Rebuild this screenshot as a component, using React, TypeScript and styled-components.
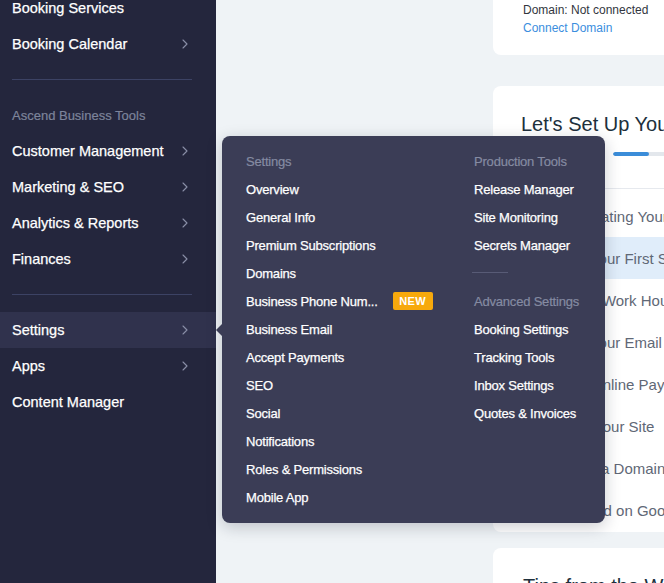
import React from "react";
import styled, { createGlobalStyle } from "styled-components";

const GlobalStyle = createGlobalStyle`
  html, body { margin: 0; padding: 0; }
  body {
    font-family: "Liberation Sans", Arial, sans-serif;
    background: #eff3f6;
    overflow: hidden;
  }
  * { box-sizing: border-box; }
`;

const Page = styled.div`
  position: relative;
  width: 664px;
  height: 583px;
  display: flex;
  overflow: hidden;
  background: #eff3f6;
`;

const Sidebar = styled.nav`
  width: 216px;
  flex-shrink: 0;
  background: #24263d;
  display: flex;
  flex-direction: column;
`;

const NavList = styled.div`
  margin-top: -10px;
  display: flex;
  flex-direction: column;
`;

const NavItem = styled.div<{ $active?: boolean }>`
  height: 36px;
  display: flex;
  align-items: center;
  justify-content: space-between;
  padding: 0 28px 0 12px;
  font-size: 14.5px;
  color: #ffffff;
  -webkit-text-stroke: 0.25px #ffffff;
  background: ${(p) => (p.$active ? "#30324d" : "transparent")};
`;

const SectionLabel = styled.div`
  height: 36px;
  display: flex;
  align-items: center;
  padding-left: 12px;
  font-size: 13px;
  color: #7d849b;
  -webkit-text-stroke: 0.2px #7d849b;
`;

const Divider = styled.div`
  height: 1px;
  background: #3c4264;
  margin: 17px 24px 17px 12px;
`;

const Chevron = () => (
  <svg width="6" height="10" viewBox="0 0 6 10" fill="none">
    <path d="M1 1l4 4-4 4" stroke="#8a8fa8" strokeWidth="1.1" strokeLinecap="round" strokeLinejoin="round" />
  </svg>
);

const Main = styled.main`
  flex: 1;
  padding-left: 277px;
  overflow: hidden;
`;

const Column = styled.div`
  width: 420px;
  margin-top: -40px;
  display: flex;
  flex-direction: column;
`;

const Card = styled.section<{ $gap?: number }>`
  background: #ffffff;
  border-radius: 8px;
  margin-bottom: ${(p) => p.$gap ?? 16}px;
`;

const DomainCard = styled(Card)`
  padding: 41px 30px 18px;
`;

const InfoLine = styled.div<{ $link?: boolean }>`
  font-size: 12px;
  line-height: 18px;
  color: ${(p) => (p.$link ? "#3b8ede" : "#32363e")};
`;

const SetupCard = styled(Card)`
  padding-top: 26px;
  padding-bottom: 1px;
`;

const SetupTitle = styled.h2`
  margin: 0;
  padding-left: 28px;
  font-size: 20px;
  line-height: 24px;
  font-weight: normal;
  color: #20303c;
  white-space: nowrap;
`;

const ProgressRow = styled.div`
  display: flex;
  align-items: center;
  gap: 12px;
  padding-left: 28px;
  margin-top: 14px;
  height: 8px;
`;

const ProgressLabel = styled.span`
  width: 80px;
  font-size: 12px;
  color: #5a6473;
`;

const Track = styled.div`
  width: 200px;
  height: 4px;
  border-radius: 2px;
  background: #e3e7ec;
  overflow: hidden;
`;

const Fill = styled.div`
  height: 100%;
  border-radius: 2px;
  background: #3b8dd9;
`;

const CardRule = styled.div`
  height: 1px;
  background: #e6e9ee;
  margin: 30px 0 6px;
`;

const StepRow = styled.div<{ $active?: boolean }>`
  height: 42px;
  display: flex;
  align-items: center;
  padding-left: 48px;
  font-size: 15px;
  color: #5f6876;
  white-space: nowrap;
  background: ${(p) => (p.$active ? "#e0edfa" : "transparent")};
`;

const TipsCard = styled(Card)`
  padding: 26px 30px 20px;
  height: 80px;
`;

const TipsTitle = styled.h2`
  margin: 0;
  font-size: 20px;
  line-height: 24px;
  font-weight: normal;
  color: #20303c;
  white-space: nowrap;
`;

const Menu = styled.div`
  position: absolute;
  left: 222px;
  top: 136px;
  width: 383px;
  height: 387px;
  background: #3b3d56;
  border-radius: 8px;
  box-shadow: 0 4px 16px rgba(20, 24, 40, 0.22);
  padding: 11px 0 12px 24px;
  display: grid;
  grid-template-columns: 228px 1fr;

  &::before {
    content: "";
    position: absolute;
    left: -6px;
    top: 188px;
    border-right: 6px solid #3b3d56;
    border-top: 6px solid transparent;
    border-bottom: 6px solid transparent;
  }
`;

const MenuCol = styled.div`
  display: flex;
  flex-direction: column;
`;

const MenuHeader = styled.div`
  height: 28px;
  display: flex;
  align-items: center;
  font-size: 13px;
  color: #858ba2;
  -webkit-text-stroke: 0.2px #858ba2;
  letter-spacing: -0.2px;
`;

const MenuLink = styled.div`
  height: 28px;
  display: flex;
  align-items: center;
  font-size: 13px;
  letter-spacing: -0.2px;
  color: #ffffff;
  -webkit-text-stroke: 0.25px #ffffff;
  white-space: nowrap;
`;

const Badge = styled.span`
  margin-left: 15px;
  width: 40px;
  height: 18px;
  border-radius: 2px;
  background: #f7a90c;
  color: #ffffff;
  font-size: 11px;
  font-weight: bold;
  letter-spacing: 0.4px;
  -webkit-text-stroke: 0;
  display: flex;
  align-items: center;
  justify-content: center;
`;

const MenuSep = styled.div`
  width: 36px;
  height: 1px;
  background: #585b76;
  margin: 13px 0 14px -2px;
`;

const settingsLinks = [
  "Overview",
  "General Info",
  "Premium Subscriptions",
  "Domains",
  "Business Phone Num...",
  "Business Email",
  "Accept Payments",
  "SEO",
  "Social",
  "Notifications",
  "Roles & Permissions",
  "Mobile App",
];

const steps = [
  "Start Creating Your Site",
  "Create Your First Service",
  "Set Your Work Hours",
  "Create Your Email Address",
  "Accept Online Payments",
  "Publish Your Site",
  "Connect a Domain",
  "Get Found on Google",
];

export default function App() {
  return (
    <>
      <GlobalStyle />
      <Page>
        <Sidebar>
          <NavList>
            <NavItem>Booking Services</NavItem>
            <NavItem>
              Booking Calendar <Chevron />
            </NavItem>
            <Divider />
            <SectionLabel>Ascend Business Tools</SectionLabel>
            <NavItem>
              Customer Management <Chevron />
            </NavItem>
            <NavItem>
              Marketing &amp; SEO <Chevron />
            </NavItem>
            <NavItem>
              Analytics &amp; Reports <Chevron />
            </NavItem>
            <NavItem>
              Finances <Chevron />
            </NavItem>
            <Divider />
            <NavItem $active>
              Settings <Chevron />
            </NavItem>
            <NavItem>
              Apps <Chevron />
            </NavItem>
            <NavItem>Content Manager</NavItem>
          </NavList>
        </Sidebar>
        <Main>
          <Column>
            <DomainCard $gap={31}>
              <InfoLine>Domain: Not connected</InfoLine>
              <InfoLine $link>Connect Domain</InfoLine>
            </DomainCard>
            <SetupCard $gap={16}>
              <SetupTitle>Let's Set Up Your Business</SetupTitle>
              <ProgressRow>
                <ProgressLabel>1/8 completed</ProgressLabel>
                <Track>
                  <Fill style={{ width: "18%" }} />
                </Track>
              </ProgressRow>
              <CardRule />
              {steps.map((s, i) => (
                <StepRow key={s} $active={i === 1}>
                  {s}
                </StepRow>
              ))}
            </SetupCard>
            <TipsCard>
              <TipsTitle>Tips from the Wix Team</TipsTitle>
            </TipsCard>
          </Column>
        </Main>
        <Menu>
          <MenuCol>
            <MenuHeader>Settings</MenuHeader>
            {settingsLinks.map((l) => (
              <MenuLink key={l}>
                {l}
                {l.startsWith("Business Phone") && <Badge>NEW</Badge>}
              </MenuLink>
            ))}
          </MenuCol>
          <MenuCol>
            <MenuHeader>Production Tools</MenuHeader>
            <MenuLink>Release Manager</MenuLink>
            <MenuLink>Site Monitoring</MenuLink>
            <MenuLink>Secrets Manager</MenuLink>
            <MenuSep />
            <MenuHeader>Advanced Settings</MenuHeader>
            <MenuLink>Booking Settings</MenuLink>
            <MenuLink>Tracking Tools</MenuLink>
            <MenuLink>Inbox Settings</MenuLink>
            <MenuLink>Quotes &amp; Invoices</MenuLink>
          </MenuCol>
        </Menu>
      </Page>
    </>
  );
}
